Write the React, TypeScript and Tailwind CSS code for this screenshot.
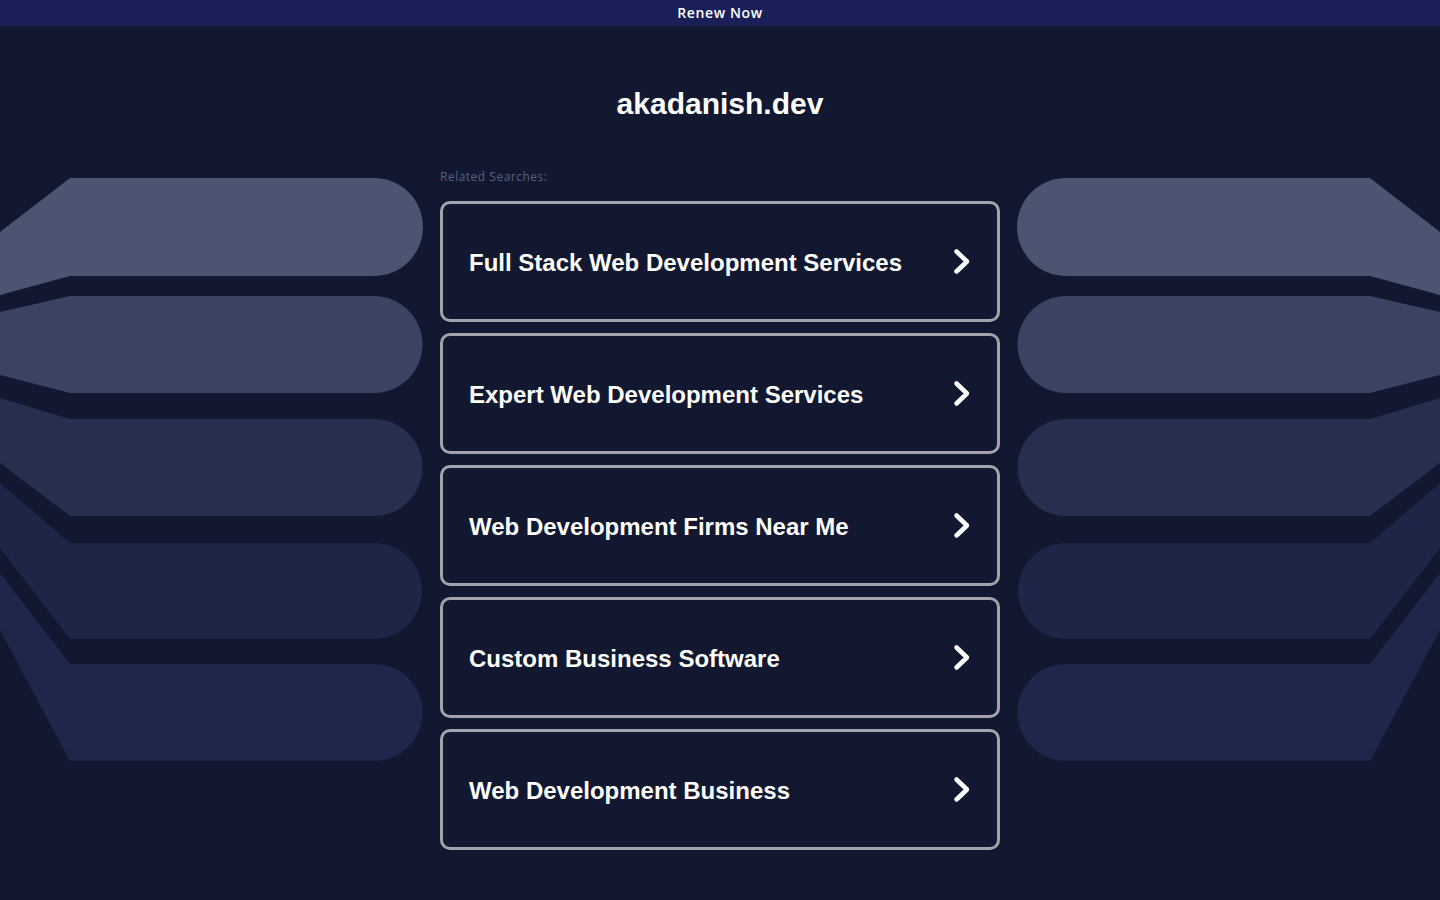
import { useState } from "react";

const searches = [
  "Full Stack Web Development Services",
  "Expert Web Development Services",
  "Web Development Firms Near Me",
  "Custom Business Software",
  "Web Development Business",
];

// Decorative ribbon shapes, drawn in page coordinates of the left side
const ribbons = [
  { d: "M0,232 L70,178 H374 A49,49 0 0 1 374,276 H70 L0,295 Z", fill: "#4b5572" },
  { d: "M0,312 L70,296 H374 A48.5,48.5 0 0 1 374,393 H70 L0,375 Z", fill: "#3a4362" },
  { d: "M0,398 L70,419 H374 A48.5,48.5 0 0 1 374,516 H70 L0,463 Z", fill: "#272f4e" },
  { d: "M0,483 L70,543 H374 A48,48 0 0 1 374,639 H70 L0,548 Z", fill: "#1e2647" },
  { d: "M0,573 L70,664 H374 A48.5,48.5 0 0 1 374,761 H70 L0,630 Z", fill: "#1e274b" },
];

function Ribbons({ mirrored }: { mirrored?: boolean }) {
  return (
    <svg width="440" height="600" viewBox="0 178 440 600" className="block mt-[152px]">
      <g transform={mirrored ? "translate(440,0) scale(-1,1)" : undefined}>
        {ribbons.map((r) => (
          <path key={r.d} d={r.d} fill={r.fill} />
        ))}
      </g>
    </svg>
  );
}

function Chevron() {
  return (
    <svg width="18" height="27" viewBox="0 0 18 27" fill="none">
      <polyline
        points="3.5,3.5 14,13.5 3.5,23.5"
        stroke="white"
        strokeWidth="4.5"
        strokeLinecap="round"
        strokeLinejoin="round"
      />
    </svg>
  );
}

export default function App() {
  const [hovered, setHovered] = useState<number | null>(null);

  return (
    <div className="min-h-[900px] bg-[#121830] flex flex-col">
      {/* Top bar */}
      <div className="h-[26px] bg-[#1a1f58] flex items-center justify-center">
        <a
          href="#"
          className="text-white text-[14px] font-semibold tracking-[0.6px] -mt-[1px]"
          style={{ fontFamily: '"Open Sans", sans-serif' }}
        >
          Renew Now
        </a>
      </div>

      <div className="flex justify-center">
        <Ribbons />

        {/* Main column */}
        <div className="w-[560px] flex flex-col">
          <h1
            className="mt-[61px] h-[34px] leading-[34px] text-center text-white text-[30px] font-bold"
            style={{ fontFamily: '"Liberation Sans", Arial, sans-serif' }}
          >
            akadanish.dev
          </h1>

          <div
            className="mt-[48px] h-[16px] leading-[16px] text-[12px] tracking-[0.5px] text-[#596180]"
            style={{ fontFamily: '"Open Sans", sans-serif' }}
          >
            Related Searches:
          </div>

          <div className="mt-[16px] flex flex-col gap-[11px]">
            {searches.map((s, i) => (
              <a
                key={s}
                href="#"
                onMouseEnter={() => setHovered(i)}
                onMouseLeave={() => setHovered(null)}
                className={
                  "h-[121px] rounded-[10px] border-[3px] border-[#a3a3ab] flex items-center justify-between pl-[26px] pr-[26px] " +
                  (hovered === i ? "bg-[#1a2140]" : "bg-[#121830]")
                }
              >
                <span
                  className="text-white text-[24px] font-bold pt-[2px]"
                  style={{ fontFamily: '"Liberation Sans", Arial, sans-serif' }}
                >
                  {s}
                </span>
                <Chevron />
              </a>
            ))}
          </div>
        </div>

        <Ribbons mirrored />
      </div>
    </div>
  );
}
